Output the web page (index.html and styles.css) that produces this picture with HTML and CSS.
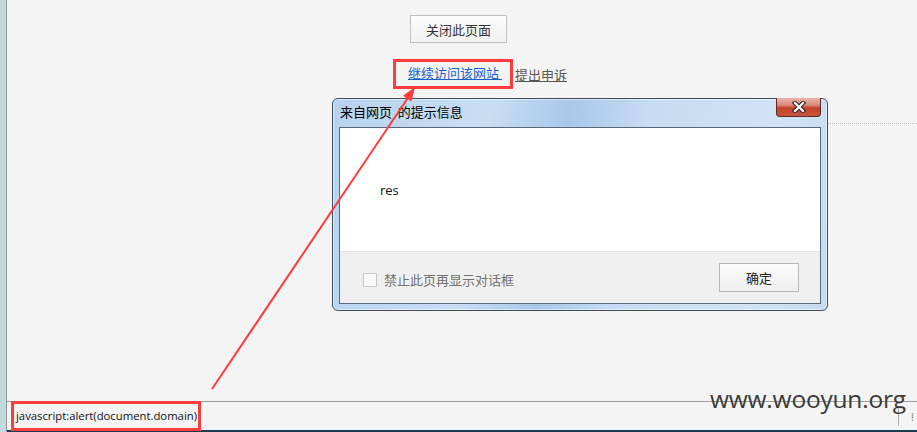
FILE: index.html
```html
<!DOCTYPE html>
<html lang="zh-CN">
<head>
<meta charset="utf-8">
<title>提示信息</title>
<link rel="stylesheet" href="styles.css">
</head>
<body>
<div class="app">
  <div class="edge"></div>
  <div class="main">
    <div class="page">
      <div class="btn-row"><button class="close-page">关闭此页面</button></div>
      <div class="link-row">
        <span class="mark"><a class="go" href="#">继续访问该网站&nbsp;</a></span>
        <a class="appeal" href="#">提出申诉</a>
      </div>
      <div class="dots"></div>

      <div class="dialog">
        <div class="title">来自网页&nbsp;&nbsp;的提示信息</div>
        <div class="x-btn">
          <svg width="18" height="12" viewBox="0 0 18 12"><path d="M5 2 L13 10 M13 2 L5 10" stroke="#3a2a2a" stroke-width="4.5" stroke-linecap="square" fill="none"/><path d="M5 2 L13 10 M13 2 L5 10" stroke="#ffffff" stroke-width="2.2" stroke-linecap="square" fill="none"/></svg>
        </div>
        <div class="client">
          <div class="msg">res</div>
          <div class="foot">
            <label class="chk"><span class="box"></span><span class="chk-text">禁止此页再显示对话框</span></label>
            <button class="ok">确定</button>
          </div>
        </div>
      </div>
    </div>
    <div class="status">
      <span class="status-text">javascript:alert(document.domain)</span>
      <span class="grip-line"></span>
      <span class="grip">⁞</span>
    </div>
    <div class="taskbar"></div>
  </div>
</div>
<div class="watermark">www.wooyun.org</div>
<svg class="arrow" width="917" height="432" viewBox="0 0 917 432">
  <line x1="212" y1="389" x2="407.5" y2="98.5" stroke="#ff3b3b" stroke-width="2"/>
  <polygon points="415,87 411.4,101.4 403.0,95.8" fill="#ff3b3b"/>
</svg>
</body>
</html>
```
FILE: styles.css
```css
* { box-sizing: border-box; }
html, body { margin: 0; padding: 0; }
body {
  width: 917px;
  height: 432px;
  overflow: hidden;
  background: #f4f4f4;
  font-family: "Noto Sans CJK SC", "Noto Sans", sans-serif;
  font-size: 13px;
  color: #222;
  position: relative;
}
.app { display: flex; height: 432px; }
.edge {
  width: 7px;
  background: #c1d9db;
  border-right: 1px solid #8c9494;
}
.main { flex: 1; display: flex; flex-direction: column; }
.page { flex: 1; position: relative; padding-top: 15px; }

.btn-row { margin-left: 403px; }
.close-page {
  width: 97px;
  height: 28px;
  border: 1px solid #c2c2c2;
  background: linear-gradient(#fdfdfd, #f1f1f1);
  font-family: "Noto Sans CJK SC", sans-serif;
  font-size: 13px;
  color: #333;
  padding: 0;
}
.link-row {
  margin-left: 386px;
  margin-top: 16px;
  display: flex;
  align-items: center;
}
.mark {
  display: inline-block;
  border: 3px solid #ff3b3b;
  height: 30px;
  line-height: 22px;
  padding: 0 8px 0 12px;
}
.go { color: #1a5fc8; text-decoration: underline; font-size: 13px; }
.appeal { color: #555; text-decoration: underline; font-size: 13px; margin-left: 2px; }
.dots {
  margin-left: 700px;
  margin-top: 34px;
  border-top: 1px dotted #bdbdbd;
}

.dialog {
  position: absolute;
  left: 325px;
  top: 98px;
  width: 496px;
  height: 213px;
  border: 1px solid #3e4c5c;
  border-radius: 6px;
  background: linear-gradient(100deg, #b7d3ee 0%, #c8def3 30%, #a9c8e8 45%, #c6dcf2 60%, #d2e4f6 85%, #c4dbf1 100%);
  padding: 0 6px 6px 6px;
  display: flex;
  flex-direction: column;
  box-shadow: inset 0 0 0 1px rgba(255,255,255,0.5);
}
.title {
  height: 28px;
  line-height: 26px;
  padding-left: 1px;
  font-size: 13px;
  color: #000;
}
.x-btn {
  position: absolute;
  top: -1px;
  right: 6px;
  width: 45px;
  height: 19px;
  border: 1px solid #5c2a24;
  border-top: none;
  border-radius: 0 0 4px 4px;
  background: linear-gradient(#e9b4a8 0%, #d98a78 40%, #c2412c 55%, #c9563e 100%);
  display: flex;
  align-items: center;
  justify-content: center;
}
.client {
  flex: 1;
  border: 1px solid #56687a;
  background: #fff;
  display: flex;
  flex-direction: column;
}
.msg {
  height: 123px;
  padding: 53px 0 0 40px;
  font-family: "Open Sans", "Noto Sans", sans-serif;
  font-size: 13px;
  color: #111;
}
.foot {
  flex: 1;
  background: #f0f0f0;
  border-top: 1px solid #e4e4e4;
  display: flex;
  align-items: flex-start;
  justify-content: space-between;
  padding: 11px 21px 0 23px;
}
.chk { display: flex; align-items: center; margin-top: 7px; }
.box {
  width: 14px;
  height: 14px;
  border: 1px solid #cacaca;
  background: #fafafa;
}
.chk-text { margin-left: 7px; color: #707070; font-size: 13px; }
.ok {
  width: 80px;
  height: 29px;
  border: 1px solid #b8b8b8;
  background: linear-gradient(#fdfdfd, #eeeeee);
  font-family: "Noto Sans CJK SC", sans-serif;
  font-size: 13px;
  color: #222;
  padding: 0;
}

.status {
  height: 29px;
  border-top: 1px solid #9c9c9c;
  position: relative;
  display: flex;
  align-items: center;
  padding-left: 8px;
}
.status-text {
  font-family: "Open Sans", "Noto Sans", sans-serif;
  font-size: 11.3px;
  color: #111;
  outline: 3px solid #ff3b3b;
  outline-offset: 1px;
  padding: 3px 0 3px 1px;
  line-height: 16px;
}
.grip-line {
  position: absolute;
  left: 891px;
  top: 4px;
  width: 1px;
  height: 20px;
  background: #b0b0b0;
}
.grip {
  position: absolute;
  left: 904px;
  top: 6px;
  color: #777;
  font-size: 11px;
}
.taskbar { height: 2px; background: #1d3b4e; }

.watermark {
  position: absolute;
  left: 710px;
  top: 382px;
  font-family: "Open Sans", "Noto Sans", sans-serif;
  font-size: 24.5px;
  color: #3a3a3a;
  letter-spacing: -0.2px;
}
.arrow { position: absolute; left: 0; top: 0; pointer-events: none; }
```
